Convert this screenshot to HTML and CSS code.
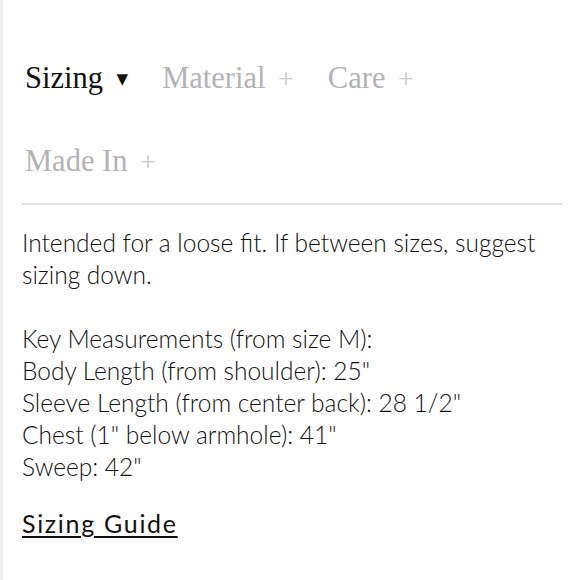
FILE: index.html
```html
<!DOCTYPE html>
<html>
<head>
<meta charset="utf-8">
<link rel="stylesheet" href="styles.css">
</head>
<body>
<div class="page">
  <nav class="tabs">
    <span class="tab active">Sizing <span class="caret">&#9660;</span></span>
    <span class="tab">Material <span class="plus">+</span></span>
    <span class="tab">Care <span class="plus">+</span></span>
    <span class="tab">Made In <span class="plus">+</span></span>
  </nav>
  <div class="content">
    <p>Intended for a loose fit. If between sizes, suggest sizing down.</p>
    <p>Key Measurements (from size M):<br>Body Length (from shoulder): 25"<br>Sleeve Length (from center back): 28 1/2"<br>Chest (1" below armhole): 41"<br>Sweep: 42"</p>
    <p class="guide-row"><a class="guide" href="#">Sizing Guide</a></p>
  </div>
</div>
</body>
</html>
```
FILE: styles.css
```css
html, body { margin: 0; padding: 0; background: #fff; }
.page {
  border-left: 3px solid #f1f1f3;
  min-height: 580px;
  box-sizing: border-box;
  padding: 0 18px 0 19px;
}
.tabs {
  display: flex;
  flex-wrap: wrap;
  column-gap: 34px;
  row-gap: 34px;
  padding: 54px 0 17px 3px;
  border-bottom: 2px solid #e2e2e2;
  font-family: "Liberation Serif", "Times New Roman", serif;
  font-size: 30.5px;
  line-height: 48px;
}
.tab { color: #b3b3b3; white-space: nowrap; }
.tab.active { color: #111; }
.caret { font-size: 15px; vertical-align: 4px; margin-left: 6px; font-family: "DejaVu Sans", sans-serif; }
.plus { font-size: 28px; color: #c8c8c8; margin-left: 5px; }
.content {
  font-family: Lato, "Open Sans", sans-serif;
  font-weight: 300;
  font-size: 24.5px;
  line-height: 32px;
  color: #111;
  padding-top: 22px;
}
.content p { margin: 0 0 32px 0; }
.content p.guide-row { margin-top: -8px; }
.guide { color: #111; font-weight: 400; font-size: 25px; letter-spacing: 1.7px; text-decoration: underline; text-underline-offset: 3px; text-decoration-thickness: 2px; }
```
